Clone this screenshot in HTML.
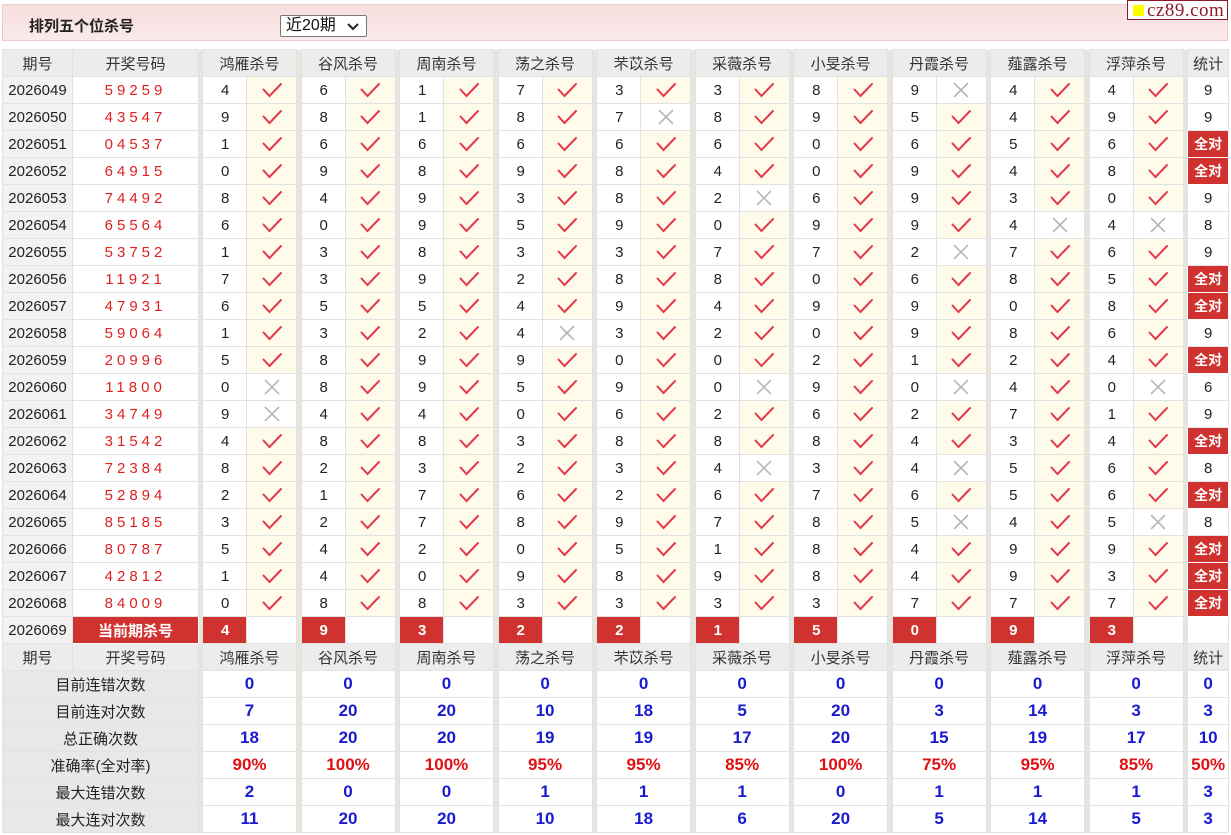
<!DOCTYPE html>
<html><head><meta charset="utf-8">
<style>
body{margin:0;background:#fff;font-family:"Liberation Sans","Noto Sans CJK SC",sans-serif;width:1231px;height:835px;overflow:hidden;position:relative}
.hd{position:absolute;left:2px;top:4px;width:1224px;height:35px;background:linear-gradient(#f6dede,#fbeaea);border:1px solid #e8cccc}
.tt{position:absolute;left:26px;top:10px;font-size:15px;font-weight:bold;color:#222}
.sel{position:absolute;left:277px;top:10px;width:87px;height:22px;border:1px solid #777;border-radius:2px;background:#fff;font-size:16px;color:#111;box-sizing:border-box;padding-left:5px;line-height:20px}
.sel svg{position:absolute;right:7px;top:7px}
.logo{position:absolute;left:1127px;top:0;width:101px;height:20px;border:1px solid #8b1a2a;background:#fff;box-sizing:border-box}
.logo i{position:absolute;left:5px;top:4px;width:11px;height:11px;background:#ffff00}
.logo b{position:absolute;left:19px;top:-1px;font-family:"Liberation Serif",serif;font-weight:normal;font-size:19px;color:#8b1a2a;letter-spacing:0.5px}
table{position:absolute;left:2px;top:49px;border-collapse:collapse;table-layout:fixed;width:1226px}
td{height:26px;border:1px solid #e2e2e2;padding:0;text-align:center;font-size:15px;color:#222;white-space:nowrap;overflow:hidden}
.s{background:#e6e6dd;border:none}
.h td{background:#ececec;color:#333}
.h td.s{background:#e6e6dd}
.q{background:#f2f2f2}
.k{color:#e02020;letter-spacing:4px}
.n{text-align:left;padding-left:18px}
.c{background:#fffbea}
.c svg,.x svg{display:block;margin:0 auto}
.a{background:#d0322f;color:#fff;font-weight:bold;font-size:14px;border-color:#fff}
.r{background:#d0322f;color:#fff;font-weight:bold;text-align:left;padding-left:18px}
.L{background:#e8e8e8}
.v{color:#1a1ad0;font-weight:bold;font-size:17px}
.p{color:#e01010;font-weight:bold;font-size:17px}
</style></head><body>
<svg width="0" height="0" style="position:absolute"><defs>
<symbol id="ck" viewBox="0 0 24 18"><path d="M3.5 8.5L9.5 15L21 3" fill="none" stroke="#e23a4a" stroke-width="2" stroke-linecap="round"/></symbol>
<symbol id="xx" viewBox="0 0 22 18"><path d="M4 2L18 16M18 2L4 16" fill="none" stroke="#b8b8b8" stroke-width="1.6"/></symbol>
</defs></svg>
<div class="hd"><div class="tt">排列五个位杀号</div><div class="sel">近20期<svg width="12" height="8"><path d="M1 1L6 6L11 1" fill="none" stroke="#222" stroke-width="2"/></svg></div></div>
<div class="logo"><i></i><b>cz89.com</b></div>
<table>
<colgroup><col style="width:70px"><col style="width:126px"><col style="width:4px">
<col style="width:44px"><col style="width:50px"><col style="width:4.5px">
<col style="width:44px"><col style="width:50px"><col style="width:4.5px">
<col style="width:44px"><col style="width:50px"><col style="width:4.5px">
<col style="width:44px"><col style="width:50px"><col style="width:4.5px">
<col style="width:44px"><col style="width:50px"><col style="width:4.5px">
<col style="width:44px"><col style="width:50px"><col style="width:4.5px">
<col style="width:44px"><col style="width:50px"><col style="width:4.5px">
<col style="width:44px"><col style="width:50px"><col style="width:4.5px">
<col style="width:44px"><col style="width:50px"><col style="width:4.5px">
<col style="width:44px"><col style="width:50px"><col style="width:4.5px">
<col style="width:41px"></colgroup>
<tr class="h"><td>期号</td><td>开奖号码</td><td class="s"></td><td colspan="2">鸿雁杀号</td><td class="s"></td><td colspan="2">谷风杀号</td><td class="s"></td><td colspan="2">周南杀号</td><td class="s"></td><td colspan="2">荡之杀号</td><td class="s"></td><td colspan="2">芣苡杀号</td><td class="s"></td><td colspan="2">采薇杀号</td><td class="s"></td><td colspan="2">小旻杀号</td><td class="s"></td><td colspan="2">丹霞杀号</td><td class="s"></td><td colspan="2">薤露杀号</td><td class="s"></td><td colspan="2">浮萍杀号</td><td class="s"></td><td>统计</td></tr>
<tr><td class="q">2026049</td><td class="k">59259</td><td class="s"></td><td class="n">4</td><td class="c"><svg width="24" height="18"><use href="#ck"/></svg></td><td class="s"></td><td class="n">6</td><td class="c"><svg width="24" height="18"><use href="#ck"/></svg></td><td class="s"></td><td class="n">1</td><td class="c"><svg width="24" height="18"><use href="#ck"/></svg></td><td class="s"></td><td class="n">7</td><td class="c"><svg width="24" height="18"><use href="#ck"/></svg></td><td class="s"></td><td class="n">3</td><td class="c"><svg width="24" height="18"><use href="#ck"/></svg></td><td class="s"></td><td class="n">3</td><td class="c"><svg width="24" height="18"><use href="#ck"/></svg></td><td class="s"></td><td class="n">8</td><td class="c"><svg width="24" height="18"><use href="#ck"/></svg></td><td class="s"></td><td class="n">9</td><td class="x"><svg width="22" height="18"><use href="#xx"/></svg></td><td class="s"></td><td class="n">4</td><td class="c"><svg width="24" height="18"><use href="#ck"/></svg></td><td class="s"></td><td class="n">4</td><td class="c"><svg width="24" height="18"><use href="#ck"/></svg></td><td class="s"></td><td>9</td></tr>
<tr><td class="q">2026050</td><td class="k">43547</td><td class="s"></td><td class="n">9</td><td class="c"><svg width="24" height="18"><use href="#ck"/></svg></td><td class="s"></td><td class="n">8</td><td class="c"><svg width="24" height="18"><use href="#ck"/></svg></td><td class="s"></td><td class="n">1</td><td class="c"><svg width="24" height="18"><use href="#ck"/></svg></td><td class="s"></td><td class="n">8</td><td class="c"><svg width="24" height="18"><use href="#ck"/></svg></td><td class="s"></td><td class="n">7</td><td class="x"><svg width="22" height="18"><use href="#xx"/></svg></td><td class="s"></td><td class="n">8</td><td class="c"><svg width="24" height="18"><use href="#ck"/></svg></td><td class="s"></td><td class="n">9</td><td class="c"><svg width="24" height="18"><use href="#ck"/></svg></td><td class="s"></td><td class="n">5</td><td class="c"><svg width="24" height="18"><use href="#ck"/></svg></td><td class="s"></td><td class="n">4</td><td class="c"><svg width="24" height="18"><use href="#ck"/></svg></td><td class="s"></td><td class="n">9</td><td class="c"><svg width="24" height="18"><use href="#ck"/></svg></td><td class="s"></td><td>9</td></tr>
<tr><td class="q">2026051</td><td class="k">04537</td><td class="s"></td><td class="n">1</td><td class="c"><svg width="24" height="18"><use href="#ck"/></svg></td><td class="s"></td><td class="n">6</td><td class="c"><svg width="24" height="18"><use href="#ck"/></svg></td><td class="s"></td><td class="n">6</td><td class="c"><svg width="24" height="18"><use href="#ck"/></svg></td><td class="s"></td><td class="n">6</td><td class="c"><svg width="24" height="18"><use href="#ck"/></svg></td><td class="s"></td><td class="n">6</td><td class="c"><svg width="24" height="18"><use href="#ck"/></svg></td><td class="s"></td><td class="n">6</td><td class="c"><svg width="24" height="18"><use href="#ck"/></svg></td><td class="s"></td><td class="n">0</td><td class="c"><svg width="24" height="18"><use href="#ck"/></svg></td><td class="s"></td><td class="n">6</td><td class="c"><svg width="24" height="18"><use href="#ck"/></svg></td><td class="s"></td><td class="n">5</td><td class="c"><svg width="24" height="18"><use href="#ck"/></svg></td><td class="s"></td><td class="n">6</td><td class="c"><svg width="24" height="18"><use href="#ck"/></svg></td><td class="s"></td><td class="a">全对</td></tr>
<tr><td class="q">2026052</td><td class="k">64915</td><td class="s"></td><td class="n">0</td><td class="c"><svg width="24" height="18"><use href="#ck"/></svg></td><td class="s"></td><td class="n">9</td><td class="c"><svg width="24" height="18"><use href="#ck"/></svg></td><td class="s"></td><td class="n">8</td><td class="c"><svg width="24" height="18"><use href="#ck"/></svg></td><td class="s"></td><td class="n">9</td><td class="c"><svg width="24" height="18"><use href="#ck"/></svg></td><td class="s"></td><td class="n">8</td><td class="c"><svg width="24" height="18"><use href="#ck"/></svg></td><td class="s"></td><td class="n">4</td><td class="c"><svg width="24" height="18"><use href="#ck"/></svg></td><td class="s"></td><td class="n">0</td><td class="c"><svg width="24" height="18"><use href="#ck"/></svg></td><td class="s"></td><td class="n">9</td><td class="c"><svg width="24" height="18"><use href="#ck"/></svg></td><td class="s"></td><td class="n">4</td><td class="c"><svg width="24" height="18"><use href="#ck"/></svg></td><td class="s"></td><td class="n">8</td><td class="c"><svg width="24" height="18"><use href="#ck"/></svg></td><td class="s"></td><td class="a">全对</td></tr>
<tr><td class="q">2026053</td><td class="k">74492</td><td class="s"></td><td class="n">8</td><td class="c"><svg width="24" height="18"><use href="#ck"/></svg></td><td class="s"></td><td class="n">4</td><td class="c"><svg width="24" height="18"><use href="#ck"/></svg></td><td class="s"></td><td class="n">9</td><td class="c"><svg width="24" height="18"><use href="#ck"/></svg></td><td class="s"></td><td class="n">3</td><td class="c"><svg width="24" height="18"><use href="#ck"/></svg></td><td class="s"></td><td class="n">8</td><td class="c"><svg width="24" height="18"><use href="#ck"/></svg></td><td class="s"></td><td class="n">2</td><td class="x"><svg width="22" height="18"><use href="#xx"/></svg></td><td class="s"></td><td class="n">6</td><td class="c"><svg width="24" height="18"><use href="#ck"/></svg></td><td class="s"></td><td class="n">9</td><td class="c"><svg width="24" height="18"><use href="#ck"/></svg></td><td class="s"></td><td class="n">3</td><td class="c"><svg width="24" height="18"><use href="#ck"/></svg></td><td class="s"></td><td class="n">0</td><td class="c"><svg width="24" height="18"><use href="#ck"/></svg></td><td class="s"></td><td>9</td></tr>
<tr><td class="q">2026054</td><td class="k">65564</td><td class="s"></td><td class="n">6</td><td class="c"><svg width="24" height="18"><use href="#ck"/></svg></td><td class="s"></td><td class="n">0</td><td class="c"><svg width="24" height="18"><use href="#ck"/></svg></td><td class="s"></td><td class="n">9</td><td class="c"><svg width="24" height="18"><use href="#ck"/></svg></td><td class="s"></td><td class="n">5</td><td class="c"><svg width="24" height="18"><use href="#ck"/></svg></td><td class="s"></td><td class="n">9</td><td class="c"><svg width="24" height="18"><use href="#ck"/></svg></td><td class="s"></td><td class="n">0</td><td class="c"><svg width="24" height="18"><use href="#ck"/></svg></td><td class="s"></td><td class="n">9</td><td class="c"><svg width="24" height="18"><use href="#ck"/></svg></td><td class="s"></td><td class="n">9</td><td class="c"><svg width="24" height="18"><use href="#ck"/></svg></td><td class="s"></td><td class="n">4</td><td class="x"><svg width="22" height="18"><use href="#xx"/></svg></td><td class="s"></td><td class="n">4</td><td class="x"><svg width="22" height="18"><use href="#xx"/></svg></td><td class="s"></td><td>8</td></tr>
<tr><td class="q">2026055</td><td class="k">53752</td><td class="s"></td><td class="n">1</td><td class="c"><svg width="24" height="18"><use href="#ck"/></svg></td><td class="s"></td><td class="n">3</td><td class="c"><svg width="24" height="18"><use href="#ck"/></svg></td><td class="s"></td><td class="n">8</td><td class="c"><svg width="24" height="18"><use href="#ck"/></svg></td><td class="s"></td><td class="n">3</td><td class="c"><svg width="24" height="18"><use href="#ck"/></svg></td><td class="s"></td><td class="n">3</td><td class="c"><svg width="24" height="18"><use href="#ck"/></svg></td><td class="s"></td><td class="n">7</td><td class="c"><svg width="24" height="18"><use href="#ck"/></svg></td><td class="s"></td><td class="n">7</td><td class="c"><svg width="24" height="18"><use href="#ck"/></svg></td><td class="s"></td><td class="n">2</td><td class="x"><svg width="22" height="18"><use href="#xx"/></svg></td><td class="s"></td><td class="n">7</td><td class="c"><svg width="24" height="18"><use href="#ck"/></svg></td><td class="s"></td><td class="n">6</td><td class="c"><svg width="24" height="18"><use href="#ck"/></svg></td><td class="s"></td><td>9</td></tr>
<tr><td class="q">2026056</td><td class="k">11921</td><td class="s"></td><td class="n">7</td><td class="c"><svg width="24" height="18"><use href="#ck"/></svg></td><td class="s"></td><td class="n">3</td><td class="c"><svg width="24" height="18"><use href="#ck"/></svg></td><td class="s"></td><td class="n">9</td><td class="c"><svg width="24" height="18"><use href="#ck"/></svg></td><td class="s"></td><td class="n">2</td><td class="c"><svg width="24" height="18"><use href="#ck"/></svg></td><td class="s"></td><td class="n">8</td><td class="c"><svg width="24" height="18"><use href="#ck"/></svg></td><td class="s"></td><td class="n">8</td><td class="c"><svg width="24" height="18"><use href="#ck"/></svg></td><td class="s"></td><td class="n">0</td><td class="c"><svg width="24" height="18"><use href="#ck"/></svg></td><td class="s"></td><td class="n">6</td><td class="c"><svg width="24" height="18"><use href="#ck"/></svg></td><td class="s"></td><td class="n">8</td><td class="c"><svg width="24" height="18"><use href="#ck"/></svg></td><td class="s"></td><td class="n">5</td><td class="c"><svg width="24" height="18"><use href="#ck"/></svg></td><td class="s"></td><td class="a">全对</td></tr>
<tr><td class="q">2026057</td><td class="k">47931</td><td class="s"></td><td class="n">6</td><td class="c"><svg width="24" height="18"><use href="#ck"/></svg></td><td class="s"></td><td class="n">5</td><td class="c"><svg width="24" height="18"><use href="#ck"/></svg></td><td class="s"></td><td class="n">5</td><td class="c"><svg width="24" height="18"><use href="#ck"/></svg></td><td class="s"></td><td class="n">4</td><td class="c"><svg width="24" height="18"><use href="#ck"/></svg></td><td class="s"></td><td class="n">9</td><td class="c"><svg width="24" height="18"><use href="#ck"/></svg></td><td class="s"></td><td class="n">4</td><td class="c"><svg width="24" height="18"><use href="#ck"/></svg></td><td class="s"></td><td class="n">9</td><td class="c"><svg width="24" height="18"><use href="#ck"/></svg></td><td class="s"></td><td class="n">9</td><td class="c"><svg width="24" height="18"><use href="#ck"/></svg></td><td class="s"></td><td class="n">0</td><td class="c"><svg width="24" height="18"><use href="#ck"/></svg></td><td class="s"></td><td class="n">8</td><td class="c"><svg width="24" height="18"><use href="#ck"/></svg></td><td class="s"></td><td class="a">全对</td></tr>
<tr><td class="q">2026058</td><td class="k">59064</td><td class="s"></td><td class="n">1</td><td class="c"><svg width="24" height="18"><use href="#ck"/></svg></td><td class="s"></td><td class="n">3</td><td class="c"><svg width="24" height="18"><use href="#ck"/></svg></td><td class="s"></td><td class="n">2</td><td class="c"><svg width="24" height="18"><use href="#ck"/></svg></td><td class="s"></td><td class="n">4</td><td class="x"><svg width="22" height="18"><use href="#xx"/></svg></td><td class="s"></td><td class="n">3</td><td class="c"><svg width="24" height="18"><use href="#ck"/></svg></td><td class="s"></td><td class="n">2</td><td class="c"><svg width="24" height="18"><use href="#ck"/></svg></td><td class="s"></td><td class="n">0</td><td class="c"><svg width="24" height="18"><use href="#ck"/></svg></td><td class="s"></td><td class="n">9</td><td class="c"><svg width="24" height="18"><use href="#ck"/></svg></td><td class="s"></td><td class="n">8</td><td class="c"><svg width="24" height="18"><use href="#ck"/></svg></td><td class="s"></td><td class="n">6</td><td class="c"><svg width="24" height="18"><use href="#ck"/></svg></td><td class="s"></td><td>9</td></tr>
<tr><td class="q">2026059</td><td class="k">20996</td><td class="s"></td><td class="n">5</td><td class="c"><svg width="24" height="18"><use href="#ck"/></svg></td><td class="s"></td><td class="n">8</td><td class="c"><svg width="24" height="18"><use href="#ck"/></svg></td><td class="s"></td><td class="n">9</td><td class="c"><svg width="24" height="18"><use href="#ck"/></svg></td><td class="s"></td><td class="n">9</td><td class="c"><svg width="24" height="18"><use href="#ck"/></svg></td><td class="s"></td><td class="n">0</td><td class="c"><svg width="24" height="18"><use href="#ck"/></svg></td><td class="s"></td><td class="n">0</td><td class="c"><svg width="24" height="18"><use href="#ck"/></svg></td><td class="s"></td><td class="n">2</td><td class="c"><svg width="24" height="18"><use href="#ck"/></svg></td><td class="s"></td><td class="n">1</td><td class="c"><svg width="24" height="18"><use href="#ck"/></svg></td><td class="s"></td><td class="n">2</td><td class="c"><svg width="24" height="18"><use href="#ck"/></svg></td><td class="s"></td><td class="n">4</td><td class="c"><svg width="24" height="18"><use href="#ck"/></svg></td><td class="s"></td><td class="a">全对</td></tr>
<tr><td class="q">2026060</td><td class="k">11800</td><td class="s"></td><td class="n">0</td><td class="x"><svg width="22" height="18"><use href="#xx"/></svg></td><td class="s"></td><td class="n">8</td><td class="c"><svg width="24" height="18"><use href="#ck"/></svg></td><td class="s"></td><td class="n">9</td><td class="c"><svg width="24" height="18"><use href="#ck"/></svg></td><td class="s"></td><td class="n">5</td><td class="c"><svg width="24" height="18"><use href="#ck"/></svg></td><td class="s"></td><td class="n">9</td><td class="c"><svg width="24" height="18"><use href="#ck"/></svg></td><td class="s"></td><td class="n">0</td><td class="x"><svg width="22" height="18"><use href="#xx"/></svg></td><td class="s"></td><td class="n">9</td><td class="c"><svg width="24" height="18"><use href="#ck"/></svg></td><td class="s"></td><td class="n">0</td><td class="x"><svg width="22" height="18"><use href="#xx"/></svg></td><td class="s"></td><td class="n">4</td><td class="c"><svg width="24" height="18"><use href="#ck"/></svg></td><td class="s"></td><td class="n">0</td><td class="x"><svg width="22" height="18"><use href="#xx"/></svg></td><td class="s"></td><td>6</td></tr>
<tr><td class="q">2026061</td><td class="k">34749</td><td class="s"></td><td class="n">9</td><td class="x"><svg width="22" height="18"><use href="#xx"/></svg></td><td class="s"></td><td class="n">4</td><td class="c"><svg width="24" height="18"><use href="#ck"/></svg></td><td class="s"></td><td class="n">4</td><td class="c"><svg width="24" height="18"><use href="#ck"/></svg></td><td class="s"></td><td class="n">0</td><td class="c"><svg width="24" height="18"><use href="#ck"/></svg></td><td class="s"></td><td class="n">6</td><td class="c"><svg width="24" height="18"><use href="#ck"/></svg></td><td class="s"></td><td class="n">2</td><td class="c"><svg width="24" height="18"><use href="#ck"/></svg></td><td class="s"></td><td class="n">6</td><td class="c"><svg width="24" height="18"><use href="#ck"/></svg></td><td class="s"></td><td class="n">2</td><td class="c"><svg width="24" height="18"><use href="#ck"/></svg></td><td class="s"></td><td class="n">7</td><td class="c"><svg width="24" height="18"><use href="#ck"/></svg></td><td class="s"></td><td class="n">1</td><td class="c"><svg width="24" height="18"><use href="#ck"/></svg></td><td class="s"></td><td>9</td></tr>
<tr><td class="q">2026062</td><td class="k">31542</td><td class="s"></td><td class="n">4</td><td class="c"><svg width="24" height="18"><use href="#ck"/></svg></td><td class="s"></td><td class="n">8</td><td class="c"><svg width="24" height="18"><use href="#ck"/></svg></td><td class="s"></td><td class="n">8</td><td class="c"><svg width="24" height="18"><use href="#ck"/></svg></td><td class="s"></td><td class="n">3</td><td class="c"><svg width="24" height="18"><use href="#ck"/></svg></td><td class="s"></td><td class="n">8</td><td class="c"><svg width="24" height="18"><use href="#ck"/></svg></td><td class="s"></td><td class="n">8</td><td class="c"><svg width="24" height="18"><use href="#ck"/></svg></td><td class="s"></td><td class="n">8</td><td class="c"><svg width="24" height="18"><use href="#ck"/></svg></td><td class="s"></td><td class="n">4</td><td class="c"><svg width="24" height="18"><use href="#ck"/></svg></td><td class="s"></td><td class="n">3</td><td class="c"><svg width="24" height="18"><use href="#ck"/></svg></td><td class="s"></td><td class="n">4</td><td class="c"><svg width="24" height="18"><use href="#ck"/></svg></td><td class="s"></td><td class="a">全对</td></tr>
<tr><td class="q">2026063</td><td class="k">72384</td><td class="s"></td><td class="n">8</td><td class="c"><svg width="24" height="18"><use href="#ck"/></svg></td><td class="s"></td><td class="n">2</td><td class="c"><svg width="24" height="18"><use href="#ck"/></svg></td><td class="s"></td><td class="n">3</td><td class="c"><svg width="24" height="18"><use href="#ck"/></svg></td><td class="s"></td><td class="n">2</td><td class="c"><svg width="24" height="18"><use href="#ck"/></svg></td><td class="s"></td><td class="n">3</td><td class="c"><svg width="24" height="18"><use href="#ck"/></svg></td><td class="s"></td><td class="n">4</td><td class="x"><svg width="22" height="18"><use href="#xx"/></svg></td><td class="s"></td><td class="n">3</td><td class="c"><svg width="24" height="18"><use href="#ck"/></svg></td><td class="s"></td><td class="n">4</td><td class="x"><svg width="22" height="18"><use href="#xx"/></svg></td><td class="s"></td><td class="n">5</td><td class="c"><svg width="24" height="18"><use href="#ck"/></svg></td><td class="s"></td><td class="n">6</td><td class="c"><svg width="24" height="18"><use href="#ck"/></svg></td><td class="s"></td><td>8</td></tr>
<tr><td class="q">2026064</td><td class="k">52894</td><td class="s"></td><td class="n">2</td><td class="c"><svg width="24" height="18"><use href="#ck"/></svg></td><td class="s"></td><td class="n">1</td><td class="c"><svg width="24" height="18"><use href="#ck"/></svg></td><td class="s"></td><td class="n">7</td><td class="c"><svg width="24" height="18"><use href="#ck"/></svg></td><td class="s"></td><td class="n">6</td><td class="c"><svg width="24" height="18"><use href="#ck"/></svg></td><td class="s"></td><td class="n">2</td><td class="c"><svg width="24" height="18"><use href="#ck"/></svg></td><td class="s"></td><td class="n">6</td><td class="c"><svg width="24" height="18"><use href="#ck"/></svg></td><td class="s"></td><td class="n">7</td><td class="c"><svg width="24" height="18"><use href="#ck"/></svg></td><td class="s"></td><td class="n">6</td><td class="c"><svg width="24" height="18"><use href="#ck"/></svg></td><td class="s"></td><td class="n">5</td><td class="c"><svg width="24" height="18"><use href="#ck"/></svg></td><td class="s"></td><td class="n">6</td><td class="c"><svg width="24" height="18"><use href="#ck"/></svg></td><td class="s"></td><td class="a">全对</td></tr>
<tr><td class="q">2026065</td><td class="k">85185</td><td class="s"></td><td class="n">3</td><td class="c"><svg width="24" height="18"><use href="#ck"/></svg></td><td class="s"></td><td class="n">2</td><td class="c"><svg width="24" height="18"><use href="#ck"/></svg></td><td class="s"></td><td class="n">7</td><td class="c"><svg width="24" height="18"><use href="#ck"/></svg></td><td class="s"></td><td class="n">8</td><td class="c"><svg width="24" height="18"><use href="#ck"/></svg></td><td class="s"></td><td class="n">9</td><td class="c"><svg width="24" height="18"><use href="#ck"/></svg></td><td class="s"></td><td class="n">7</td><td class="c"><svg width="24" height="18"><use href="#ck"/></svg></td><td class="s"></td><td class="n">8</td><td class="c"><svg width="24" height="18"><use href="#ck"/></svg></td><td class="s"></td><td class="n">5</td><td class="x"><svg width="22" height="18"><use href="#xx"/></svg></td><td class="s"></td><td class="n">4</td><td class="c"><svg width="24" height="18"><use href="#ck"/></svg></td><td class="s"></td><td class="n">5</td><td class="x"><svg width="22" height="18"><use href="#xx"/></svg></td><td class="s"></td><td>8</td></tr>
<tr><td class="q">2026066</td><td class="k">80787</td><td class="s"></td><td class="n">5</td><td class="c"><svg width="24" height="18"><use href="#ck"/></svg></td><td class="s"></td><td class="n">4</td><td class="c"><svg width="24" height="18"><use href="#ck"/></svg></td><td class="s"></td><td class="n">2</td><td class="c"><svg width="24" height="18"><use href="#ck"/></svg></td><td class="s"></td><td class="n">0</td><td class="c"><svg width="24" height="18"><use href="#ck"/></svg></td><td class="s"></td><td class="n">5</td><td class="c"><svg width="24" height="18"><use href="#ck"/></svg></td><td class="s"></td><td class="n">1</td><td class="c"><svg width="24" height="18"><use href="#ck"/></svg></td><td class="s"></td><td class="n">8</td><td class="c"><svg width="24" height="18"><use href="#ck"/></svg></td><td class="s"></td><td class="n">4</td><td class="c"><svg width="24" height="18"><use href="#ck"/></svg></td><td class="s"></td><td class="n">9</td><td class="c"><svg width="24" height="18"><use href="#ck"/></svg></td><td class="s"></td><td class="n">9</td><td class="c"><svg width="24" height="18"><use href="#ck"/></svg></td><td class="s"></td><td class="a">全对</td></tr>
<tr><td class="q">2026067</td><td class="k">42812</td><td class="s"></td><td class="n">1</td><td class="c"><svg width="24" height="18"><use href="#ck"/></svg></td><td class="s"></td><td class="n">4</td><td class="c"><svg width="24" height="18"><use href="#ck"/></svg></td><td class="s"></td><td class="n">0</td><td class="c"><svg width="24" height="18"><use href="#ck"/></svg></td><td class="s"></td><td class="n">9</td><td class="c"><svg width="24" height="18"><use href="#ck"/></svg></td><td class="s"></td><td class="n">8</td><td class="c"><svg width="24" height="18"><use href="#ck"/></svg></td><td class="s"></td><td class="n">9</td><td class="c"><svg width="24" height="18"><use href="#ck"/></svg></td><td class="s"></td><td class="n">8</td><td class="c"><svg width="24" height="18"><use href="#ck"/></svg></td><td class="s"></td><td class="n">4</td><td class="c"><svg width="24" height="18"><use href="#ck"/></svg></td><td class="s"></td><td class="n">9</td><td class="c"><svg width="24" height="18"><use href="#ck"/></svg></td><td class="s"></td><td class="n">3</td><td class="c"><svg width="24" height="18"><use href="#ck"/></svg></td><td class="s"></td><td class="a">全对</td></tr>
<tr><td class="q">2026068</td><td class="k">84009</td><td class="s"></td><td class="n">0</td><td class="c"><svg width="24" height="18"><use href="#ck"/></svg></td><td class="s"></td><td class="n">8</td><td class="c"><svg width="24" height="18"><use href="#ck"/></svg></td><td class="s"></td><td class="n">8</td><td class="c"><svg width="24" height="18"><use href="#ck"/></svg></td><td class="s"></td><td class="n">3</td><td class="c"><svg width="24" height="18"><use href="#ck"/></svg></td><td class="s"></td><td class="n">3</td><td class="c"><svg width="24" height="18"><use href="#ck"/></svg></td><td class="s"></td><td class="n">3</td><td class="c"><svg width="24" height="18"><use href="#ck"/></svg></td><td class="s"></td><td class="n">3</td><td class="c"><svg width="24" height="18"><use href="#ck"/></svg></td><td class="s"></td><td class="n">7</td><td class="c"><svg width="24" height="18"><use href="#ck"/></svg></td><td class="s"></td><td class="n">7</td><td class="c"><svg width="24" height="18"><use href="#ck"/></svg></td><td class="s"></td><td class="n">7</td><td class="c"><svg width="24" height="18"><use href="#ck"/></svg></td><td class="s"></td><td class="a">全对</td></tr>
<tr><td class="q">2026069</td><td class="a" style="font-size:15px">当前期杀号</td><td class="s"></td><td class="r">4</td><td></td><td class="s"></td><td class="r">9</td><td></td><td class="s"></td><td class="r">3</td><td></td><td class="s"></td><td class="r">2</td><td></td><td class="s"></td><td class="r">2</td><td></td><td class="s"></td><td class="r">1</td><td></td><td class="s"></td><td class="r">5</td><td></td><td class="s"></td><td class="r">0</td><td></td><td class="s"></td><td class="r">9</td><td></td><td class="s"></td><td class="r">3</td><td></td><td class="s"></td><td></td></tr>
<tr class="h"><td>期号</td><td>开奖号码</td><td class="s"></td><td colspan="2">鸿雁杀号</td><td class="s"></td><td colspan="2">谷风杀号</td><td class="s"></td><td colspan="2">周南杀号</td><td class="s"></td><td colspan="2">荡之杀号</td><td class="s"></td><td colspan="2">芣苡杀号</td><td class="s"></td><td colspan="2">采薇杀号</td><td class="s"></td><td colspan="2">小旻杀号</td><td class="s"></td><td colspan="2">丹霞杀号</td><td class="s"></td><td colspan="2">薤露杀号</td><td class="s"></td><td colspan="2">浮萍杀号</td><td class="s"></td><td>统计</td></tr>
<tr><td colspan="2" class="L">目前连错次数</td><td class="s"></td><td colspan="2" class="v">0</td><td class="s"></td><td colspan="2" class="v">0</td><td class="s"></td><td colspan="2" class="v">0</td><td class="s"></td><td colspan="2" class="v">0</td><td class="s"></td><td colspan="2" class="v">0</td><td class="s"></td><td colspan="2" class="v">0</td><td class="s"></td><td colspan="2" class="v">0</td><td class="s"></td><td colspan="2" class="v">0</td><td class="s"></td><td colspan="2" class="v">0</td><td class="s"></td><td colspan="2" class="v">0</td><td class="s"></td><td class="v">0</td></tr>
<tr><td colspan="2" class="L">目前连对次数</td><td class="s"></td><td colspan="2" class="v">7</td><td class="s"></td><td colspan="2" class="v">20</td><td class="s"></td><td colspan="2" class="v">20</td><td class="s"></td><td colspan="2" class="v">10</td><td class="s"></td><td colspan="2" class="v">18</td><td class="s"></td><td colspan="2" class="v">5</td><td class="s"></td><td colspan="2" class="v">20</td><td class="s"></td><td colspan="2" class="v">3</td><td class="s"></td><td colspan="2" class="v">14</td><td class="s"></td><td colspan="2" class="v">3</td><td class="s"></td><td class="v">3</td></tr>
<tr><td colspan="2" class="L">总正确次数</td><td class="s"></td><td colspan="2" class="v">18</td><td class="s"></td><td colspan="2" class="v">20</td><td class="s"></td><td colspan="2" class="v">20</td><td class="s"></td><td colspan="2" class="v">19</td><td class="s"></td><td colspan="2" class="v">19</td><td class="s"></td><td colspan="2" class="v">17</td><td class="s"></td><td colspan="2" class="v">20</td><td class="s"></td><td colspan="2" class="v">15</td><td class="s"></td><td colspan="2" class="v">19</td><td class="s"></td><td colspan="2" class="v">17</td><td class="s"></td><td class="v">10</td></tr>
<tr><td colspan="2" class="L">准确率(全对率)</td><td class="s"></td><td colspan="2" class="p">90%</td><td class="s"></td><td colspan="2" class="p">100%</td><td class="s"></td><td colspan="2" class="p">100%</td><td class="s"></td><td colspan="2" class="p">95%</td><td class="s"></td><td colspan="2" class="p">95%</td><td class="s"></td><td colspan="2" class="p">85%</td><td class="s"></td><td colspan="2" class="p">100%</td><td class="s"></td><td colspan="2" class="p">75%</td><td class="s"></td><td colspan="2" class="p">95%</td><td class="s"></td><td colspan="2" class="p">85%</td><td class="s"></td><td class="p">50%</td></tr>
<tr><td colspan="2" class="L">最大连错次数</td><td class="s"></td><td colspan="2" class="v">2</td><td class="s"></td><td colspan="2" class="v">0</td><td class="s"></td><td colspan="2" class="v">0</td><td class="s"></td><td colspan="2" class="v">1</td><td class="s"></td><td colspan="2" class="v">1</td><td class="s"></td><td colspan="2" class="v">1</td><td class="s"></td><td colspan="2" class="v">0</td><td class="s"></td><td colspan="2" class="v">1</td><td class="s"></td><td colspan="2" class="v">1</td><td class="s"></td><td colspan="2" class="v">1</td><td class="s"></td><td class="v">3</td></tr>
<tr><td colspan="2" class="L">最大连对次数</td><td class="s"></td><td colspan="2" class="v">11</td><td class="s"></td><td colspan="2" class="v">20</td><td class="s"></td><td colspan="2" class="v">20</td><td class="s"></td><td colspan="2" class="v">10</td><td class="s"></td><td colspan="2" class="v">18</td><td class="s"></td><td colspan="2" class="v">6</td><td class="s"></td><td colspan="2" class="v">20</td><td class="s"></td><td colspan="2" class="v">5</td><td class="s"></td><td colspan="2" class="v">14</td><td class="s"></td><td colspan="2" class="v">5</td><td class="s"></td><td class="v">3</td></tr>
</table>
</body></html>
